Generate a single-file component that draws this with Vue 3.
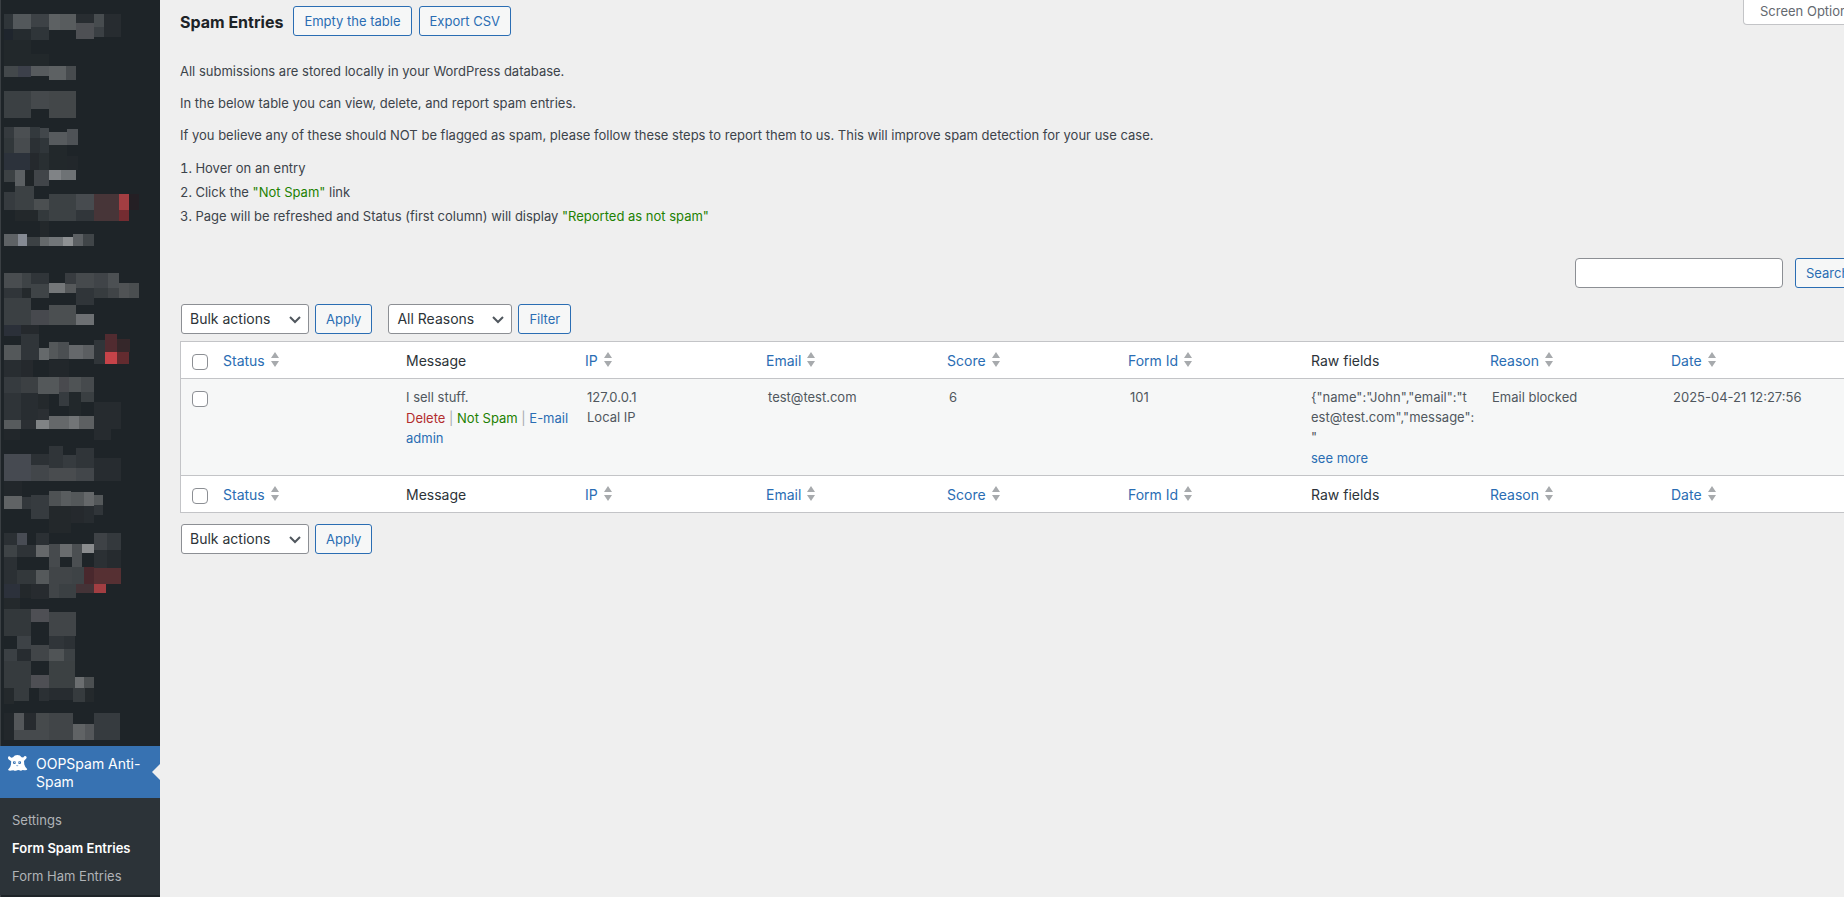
<script setup>
import { ref } from 'vue'

// Redacted menu area: [x, y, width, height, colour] in thirds of a pixel.
const blocks = [
  [12, 42, 27, 45, '#2f3539'], [39, 42, 54, 45, '#53585b'], [93, 42, 54, 39, '#3d4246'], [147, 42, 33, 48, '#5d6163'], [180, 42, 48, 48, '#585c5e'], [228, 42, 54, 27, '#282d31'], [282, 42, 30, 39, '#474c4f'], [312, 42, 51, 69, '#272c30'],
  [12, 87, 27, 33, '#1f252d'], [39, 87, 54, 33, '#252b2f'], [93, 81, 54, 39, '#2f3539'], [228, 69, 54, 48, '#4e5054'], [282, 81, 30, 30, '#3b4044'],
  [12, 120, 81, 78, '#22282b'], [93, 162, 54, 36, '#22282b'],
  [12, 198, 42, 33, '#43484b'], [54, 198, 39, 33, '#3c404a'], [93, 198, 54, 30, '#575b5e'], [147, 198, 51, 42, '#5d6163'], [198, 198, 30, 42, '#474b4e'],
  [12, 273, 81, 81, '#3b4043'], [93, 273, 54, 54, '#45494c'], [147, 273, 81, 81, '#434749'],
  [12, 381, 30, 33, '#353a3e'], [42, 381, 48, 33, '#4b4f52'], [90, 381, 30, 33, '#33393d'], [120, 384, 27, 30, '#42474b'], [147, 396, 54, 39, '#575b5e'], [201, 387, 33, 48, '#4e5256'],
  [12, 414, 30, 45, '#31373a'], [42, 414, 48, 45, '#474b4e'], [90, 414, 30, 45, '#2b3034'], [120, 414, 27, 45, '#30363a'], [147, 435, 54, 75, '#22282b'], [201, 468, 33, 42, '#22272b'],
  [12, 459, 78, 51, '#2c323b'], [90, 459, 27, 51, '#25292d'], [117, 459, 30, 51, '#292f32'],
  [12, 510, 33, 36, '#3c4144'], [45, 510, 30, 48, '#5c6063'], [75, 510, 27, 48, '#1f2427'], [102, 510, 45, 48, '#414549'], [147, 510, 36, 30, '#808386'], [183, 510, 45, 30, '#6e7275'],
  [12, 576, 33, 54, '#363b3f'], [45, 558, 57, 72, '#3c4144'], [102, 597, 45, 33, '#4b4f51'], [147, 582, 81, 81, '#3c4144'], [228, 582, 54, 48, '#474b4f'], [282, 582, 75, 81, '#473538'], [357, 582, 30, 48, '#a33e42'], [387, 582, 30, 48, '#241f24'],
  [45, 630, 69, 33, '#23282b'], [114, 630, 33, 33, '#33393c'], [228, 630, 54, 33, '#31363a'], [357, 630, 30, 33, '#742c31'],
  [120, 663, 27, 48, '#23282b'],
  [12, 702, 42, 36, '#5e6265'], [54, 702, 27, 36, '#858a93'], [81, 711, 39, 27, '#3c4144'], [120, 711, 27, 27, '#65696b'], [147, 711, 42, 27, '#727679'], [189, 711, 30, 27, '#8e9193'], [219, 702, 30, 36, '#5c6063'], [249, 702, 33, 36, '#404548'],

  [12, 819, 54, 45, '#494d50'], [66, 819, 27, 45, '#3e4346'], [93, 819, 54, 33, '#303539'], [195, 819, 33, 33, '#383c40'], [228, 819, 54, 45, '#464a4d'], [282, 819, 42, 45, '#404448'], [324, 819, 33, 45, '#4c5053'],
  [12, 864, 54, 30, '#303539'], [66, 864, 27, 30, '#24292c'], [93, 852, 54, 42, '#3f4447'], [147, 849, 48, 30, '#747779'], [195, 852, 33, 27, '#56595b'], [228, 864, 54, 51, '#303539'], [282, 864, 42, 30, '#373c3f'], [324, 864, 33, 30, '#404447'], [357, 849, 30, 45, '#505355'], [387, 849, 30, 45, '#4a4e50'],
  [12, 894, 81, 81, '#3b4043'], [93, 930, 54, 45, '#47494e'], [147, 915, 81, 60, '#4b4f51'], [228, 942, 54, 33, '#6d7073'],
  [12, 975, 51, 33, '#2b3039'], [63, 975, 54, 27, '#25292d'], [63, 1002, 54, 78, '#303539'], [12, 1035, 51, 45, '#54585a'], [117, 1044, 30, 36, '#65696b'], [147, 1026, 27, 51, '#54585a'], [174, 1026, 33, 51, '#4b4f52'], [207, 1035, 42, 42, '#65686b'], [249, 1035, 33, 42, '#5b5e61'],
  [282, 1020, 33, 72, '#303539'], [315, 1002, 36, 54, '#512b30'], [351, 1017, 39, 39, '#35272a'], [315, 1056, 36, 36, '#c64349'], [351, 1056, 36, 36, '#632b2f'],
  [12, 1080, 51, 51, '#282d31'], [63, 1080, 36, 51, '#25292d'], [147, 1080, 60, 51, '#22272b'],
  [12, 1131, 51, 48, '#363b3f'], [63, 1131, 51, 48, '#3c4043'], [114, 1131, 63, 51, '#54585a'], [177, 1131, 30, 45, '#494a4e'], [207, 1131, 36, 45, '#4f5355'], [243, 1131, 39, 45, '#464a4d'],
  [12, 1179, 51, 81, '#2f3438'], [63, 1179, 51, 81, '#282d31'], [114, 1182, 33, 45, '#24292c'], [177, 1176, 30, 42, '#363b3f'], [207, 1176, 36, 72, '#22282b'], [243, 1176, 39, 30, '#3a3f42'],
  [114, 1227, 33, 33, '#2b2f33'], [12, 1260, 51, 27, '#575b5d'], [63, 1260, 45, 27, '#2b2f33'], [108, 1260, 39, 27, '#808385'], [147, 1248, 60, 39, '#65686a'], [207, 1248, 30, 39, '#727577'], [237, 1248, 45, 39, '#5d6062'], [282, 1206, 81, 81, '#262b2f'], [282, 1287, 51, 33, '#262b2f'], [12, 1287, 48, 33, '#22272b'],
  [147, 1338, 42, 66, '#303539'], [228, 1344, 54, 60, '#303539'], [189, 1365, 39, 39, '#363b3f'], [93, 1362, 54, 33, '#2c3135'], [12, 1362, 81, 81, '#464a51'], [93, 1395, 54, 48, '#42464a'], [147, 1404, 81, 39, '#494c4f'], [228, 1404, 54, 39, '#42464a'], [282, 1374, 81, 69, '#272c30'],
  [12, 1443, 54, 45, '#22272b'], [12, 1488, 54, 39, '#606365'], [66, 1491, 27, 36, '#33383c'], [93, 1485, 54, 72, '#363b3f'], [147, 1473, 36, 45, '#4e5254'], [183, 1473, 30, 45, '#595d5f'], [213, 1476, 39, 42, '#54585a'], [252, 1476, 30, 42, '#65686a'], [282, 1485, 27, 30, '#54585a'], [282, 1515, 27, 30, '#303539'],

  [147, 1518, 66, 81, '#23282b'], [213, 1518, 39, 51, '#25292d'], [252, 1518, 30, 51, '#272c30'],
  [12, 1599, 39, 36, '#2b3034'], [51, 1599, 30, 36, '#484c54'], [108, 1599, 39, 36, '#2b3034'], [282, 1599, 39, 51, '#3e4246'], [321, 1599, 42, 51, '#34393d'],
  [12, 1635, 39, 36, '#3e4346'], [51, 1635, 57, 36, '#2e3337'], [108, 1635, 39, 36, '#65686a'], [147, 1632, 33, 69, '#464a4d'], [180, 1632, 36, 39, '#696c6e'], [216, 1632, 30, 69, '#4b4f52'], [246, 1632, 36, 27, '#8a8c8e'],
  [282, 1650, 39, 54, '#2b3034'], [321, 1650, 42, 54, '#262b2f'],
  [12, 1671, 39, 81, '#2b3034'], [51, 1710, 57, 42, '#33383b'], [108, 1710, 39, 42, '#55595b'], [147, 1701, 69, 51, '#414548'], [216, 1701, 36, 51, '#3e4346'], [252, 1701, 30, 51, '#49282d'], [282, 1704, 81, 48, '#563033'],
  [12, 1752, 48, 42, '#2c313b'], [60, 1752, 33, 42, '#23282b'], [93, 1752, 54, 45, '#272b2f'], [147, 1752, 30, 42, '#414548'], [177, 1752, 51, 42, '#3b4043'], [228, 1752, 54, 27, '#443337'], [282, 1752, 36, 27, '#a23e42'],
  [12, 1794, 48, 33, '#24292c'],
  [12, 1827, 81, 81, '#33383b'], [93, 1827, 54, 39, '#4e4f54'], [147, 1836, 81, 72, '#414548'],
  [51, 1908, 42, 39, '#3d4246'], [147, 1908, 45, 39, '#303539'], [192, 1908, 33, 39, '#2c3135'],
  [12, 1947, 39, 36, '#3b4044'], [51, 1947, 42, 36, '#272c30'], [93, 1935, 54, 48, '#414548'], [147, 1947, 45, 36, '#505456'], [192, 1947, 33, 36, '#3d4245'],
  [12, 1983, 81, 81, '#363b3e'], [93, 2025, 54, 39, '#4e4f54'], [147, 1983, 78, 81, '#3c4143'], [225, 2031, 27, 33, '#6b6e70'], [252, 2031, 30, 33, '#4b4f51'],
  [12, 2064, 30, 48, '#24292c'], [42, 2064, 45, 39, '#363b3e'], [117, 2064, 30, 39, '#2b3034'], [147, 2064, 72, 36, '#272c30'], [219, 2064, 36, 42, '#363b3e'], [255, 2064, 27, 42, '#24292c'],
  [12, 2139, 30, 81, '#22272b'], [42, 2139, 30, 51, '#54575a'], [72, 2139, 36, 51, '#272b2f'], [108, 2139, 39, 51, '#464a4c'], [42, 2190, 105, 30, '#464a4d'], [147, 2139, 72, 81, '#414548'], [219, 2172, 36, 48, '#606365'], [255, 2172, 27, 48, '#54575a'], [282, 2139, 78, 81, '#363b3f'],
]

const columns = [
  { label: 'Status', sortable: true },
  { label: 'Message', sortable: false },
  { label: 'IP', sortable: true },
  { label: 'Email', sortable: true },
  { label: 'Score', sortable: true },
  { label: 'Form Id', sortable: true },
  { label: 'Raw fields', sortable: false },
  { label: 'Reason', sortable: true },
  { label: 'Date', sortable: true },
]

const query = ref('')
const selected = ref(false)
</script>

<template>
  <div class="admin">
    <nav class="sidebar" aria-label="Admin menu">
      <svg class="redacted" viewBox="0 0 480 2238" shape-rendering="crispEdges" aria-hidden="true">
        <rect v-for="(b, i) in blocks" :key="i" :x="b[0]" :y="b[1]" :width="b[2]" :height="b[3]" :fill="b[4]" />
      </svg>
      <a class="menu-current" href="#">
        <svg class="ghost" viewBox="0 0 20 16" aria-hidden="true">
          <path
            fill="#fff"
            fill-rule="evenodd"
            d="M0 2.500Q.300 1 1.800 1.400L3.200 2.700 5 2.300Q6.500 0 9.400 0T13.600 2.300L15.200 2.600 16.300 1.200Q17.800.600 18.600 2.100 18.800 3.400 17.300 4.600L16 6 16.300 9.500Q16.900 12 19.300 14.200 18.800 15.600 16.500 15.300L14.500 14.900Q13 16.300 11.400 15.200 9.900 14.600 8.600 15.400 7 16.400 5.500 15.200L3.300 15.600Q.700 15.900 0 14.700 2.600 12.500 3 9.500L3.200 6.200 1.400 5Q-.200 4 0 2.500ZM6.400 6A1.500 1.500 0 1 0 6.400 9 1.500 1.500 0 1 0 6.400 6ZM11.600 6A1.500 1.500 0 1 0 11.600 9 1.500 1.500 0 1 0 11.600 6ZM8 10.200Q9.200 10.900 10.400 10.200 10 11.300 9.200 11.300T8 10.200Z"
          />
          <circle cx="6.800" cy="7.200" r=".6" fill="#fff" />
          <circle cx="11.200" cy="7.200" r=".6" fill="#fff" />
        </svg>
        <span>OOPSpam Anti-Spam</span>
      </a>
      <ul class="submenu">
        <li><a href="#">Settings</a></li>
        <li><a class="on" href="#">Form Spam Entries</a></li>
        <li><a href="#">Form Ham Entries</a></li>
      </ul>
    </nav>

    <main class="main">
      <div class="wrap">
        <header class="top">
          <h1>Spam Entries</h1>
          <button class="btn" type="button">Empty the table</button>
          <button class="btn" type="button">Export CSV</button>
          <button class="screen-options" type="button">Screen Options</button>
        </header>

        <section class="intro">
          <p>All submissions are stored locally in your WordPress database.</p>
          <p>In the below table you can view, delete, and report spam entries.</p>
          <p>If you believe any of these should NOT be flagged as spam, please follow these steps to report them to us. This will improve spam detection for your use case.</p>
          <ol>
            <li>Hover on an entry</li>
            <li>Click the <span class="green">"Not Spam"</span> link</li>
            <li>Page will be refreshed and Status (first column) will display <span class="green">"Reported as not spam"</span></li>
          </ol>
        </section>

        <form class="search" @submit.prevent>
          <input v-model="query" type="search" aria-label="Search" />
          <button class="btn" type="submit">Search</button>
        </form>

        <div class="tablenav">
          <div class="select bulk">
            <select aria-label="Bulk actions"><option>Bulk actions</option></select>
            <svg viewBox="0 0 12 8" aria-hidden="true"><path d="M1 1l5 5 5-5" /></svg>
          </div>
          <button class="btn" type="button">Apply</button>
          <div class="select reasons">
            <select aria-label="Filter by reason"><option>All Reasons</option></select>
            <svg viewBox="0 0 12 8" aria-hidden="true"><path d="M1 1l5 5 5-5" /></svg>
          </div>
          <button class="btn" type="button">Filter</button>
        </div>

        <table class="entries">
          <thead>
            <tr>
              <td class="check"><input v-model="selected" type="checkbox" aria-label="Select all" /></td>
              <th v-for="c in columns" :key="c.label" scope="col" :class="{ sortable: c.sortable }">
                <a v-if="c.sortable" href="#">{{ c.label }}
                  <svg viewBox="0 0 8 15" aria-hidden="true"><path d="M4 0l4 6H0zM0 9h8l-4 6z" /></svg>
                </a>
                <template v-else>{{ c.label }}</template>
              </th>
            </tr>
          </thead>
          <tbody>
            <tr>
              <td class="check"><input v-model="selected" type="checkbox" aria-label="Select entry" /></td>
              <td></td>
              <td class="message">
                I sell stuff.
                <div class="actions">
                  <a class="delete" href="#">Delete</a> | <a class="green" href="#">Not Spam</a> | <a href="#"><span class="keep">E-mail</span> admin</a>
                </div>
              </td>
              <td>127.0.0.1<br />Local IP</td>
              <td>test@test.com</td>
              <td>6</td>
              <td>101</td>
              <td class="raw">
                <span>{"name":"John","email":"t<br />est@test.com","message":<br />"</span>
                <a href="#">see more</a>
              </td>
              <td>Email blocked</td>
              <td>2025-04-21 12:27:56</td>
            </tr>
          </tbody>
          <tfoot>
            <tr>
              <td class="check"><input v-model="selected" type="checkbox" aria-label="Select all" /></td>
              <th v-for="c in columns" :key="c.label" scope="col" :class="{ sortable: c.sortable }">
                <a v-if="c.sortable" href="#">{{ c.label }}
                  <svg viewBox="0 0 8 15" aria-hidden="true"><path d="M4 0l4 6H0zM0 9h8l-4 6z" /></svg>
                </a>
                <template v-else>{{ c.label }}</template>
              </th>
            </tr>
          </tfoot>
        </table>

        <div class="tablenav bottom">
          <div class="select bulk">
            <select aria-label="Bulk actions"><option>Bulk actions</option></select>
            <svg viewBox="0 0 12 8" aria-hidden="true"><path d="M1 1l5 5 5-5" /></svg>
          </div>
          <button class="btn" type="button">Apply</button>
        </div>
      </div>
    </main>
  </div>
</template>

<style>
body {
  background: #efefef;
}
</style>

<style scoped>
.admin {
  --blue: #2a6db3;
  --bleed: 24px;
  display: flex;
  min-height: 100vh;
  overflow: hidden;
  color: #3c434a;
  font: 13px/20px Inter, "Liberation Sans", sans-serif;
}
.admin * {
  box-sizing: border-box;
}
a {
  color: var(--blue);
  text-decoration: none;
}
.green {
  color: #1d8102;
}

.sidebar {
  flex: none;
  width: 160px;
  background: #1e2428;
  box-shadow: inset 1px 0 #3a3f43;
}
.redacted {
  display: block;
  width: 160px;
  height: 746px;
}
.menu-current {
  position: relative;
  display: flex;
  gap: 8px;
  height: 52px;
  padding: 9px 8px;
  background: #3772b2;
  color: #fff;
  font-size: 14px;
  line-height: 18px;
}
.menu-current::after {
  content: "";
  position: absolute;
  right: 0;
  top: 18px;
  border: 8px solid transparent;
  border-right-color: #efefef;
}
.ghost {
  flex: none;
  width: 20px;
  height: 16px;
}
.submenu {
  margin: 0;
  padding: 8px 0 5px;
  background: #2c3338;
  list-style: none;
}
.submenu a {
  display: block;
  padding: 4px 12px;
  color: #b0b3b7;
}
.submenu .on {
  color: #fff;
  font-weight: 600;
}

.main {
  flex: 1;
  min-width: 0;
  padding-left: 20px;
}
.wrap {
  margin-right: calc(-1 * var(--bleed));
}
.top {
  display: flex;
  align-items: flex-start;
  gap: 7px;
  padding-top: 6px;
}
h1 {
  margin: 0 3px 0 0;
  color: #1d2327;
  font-size: 16px;
  font-weight: 700;
  line-height: 32px;
}
.btn {
  height: 30px;
  padding: 0 10px;
  border: 1px solid var(--blue);
  border-radius: 3px;
  background: #f6f7f7;
  color: var(--blue);
  font: inherit;
  white-space: nowrap;
}
.screen-options {
  width: 125px;
  height: 25px;
  margin: -6px 0 0 auto;
  padding: 0 16px 3px;
  border: 1px solid #c3c4c7;
  border-top: 0;
  border-radius: 0 0 4px 4px;
  background: #fff;
  color: #646970;
  font: inherit;
  text-align: left;
  white-space: nowrap;
}
.intro {
  padding-top: 23px;
}
.intro p {
  margin: 0 0 12px;
}
ol {
  margin: -1px 0 0;
  padding: 0;
  line-height: 24px;
  list-style-position: inside;
}
.search {
  display: flex;
  justify-content: flex-end;
  gap: 12px;
  margin-top: 30px;
}
.search input {
  width: 208px;
  height: 30px;
  padding: 0 8px;
  border: 1px solid #8c8f94;
  border-radius: 4px;
  background: #fff;
  font: inherit;
}
.search .btn {
  width: 73px;
  text-align: left;
}

.tablenav {
  display: flex;
  gap: 6px;
  margin: 16px 0 7px;
  padding-left: 1px;
}
.tablenav.bottom {
  margin-top: 11px;
}
.select {
  position: relative;
}
.bulk {
  width: 128px;
}
.reasons {
  width: 124px;
  margin-left: 10px;
}
.select select {
  width: 100%;
  height: 30px;
  padding: 0 24px 0 8px;
  appearance: none;
  border: 1px solid #8c8f94;
  border-radius: 3px;
  background: #fff;
  color: #2c3338;
  font: inherit;
  font-size: 14px;
}
.select svg {
  position: absolute;
  top: 12px;
  right: 8px;
  width: 12px;
  height: 8px;
  fill: none;
  stroke: #50575e;
  stroke-width: 2;
  pointer-events: none;
}

.entries {
  width: calc(100% - var(--bleed) + 1px);
  table-layout: fixed;
  border: 1px solid #c3c4c7;
  border-spacing: 0;
  background: #fff;
}
.entries th,
.entries td {
  padding: 8px 10px;
  text-align: left;
  vertical-align: top;
}
.entries th {
  padding: 9px 10px 7px;
  color: #2c3338;
  font-size: 14px;
  font-weight: 400;
}
.entries th.sortable {
  padding-left: 8px;
}
.entries .check {
  width: 34px;
  padding: 12px 0 0 11px;
  line-height: 0;
}
.check input {
  width: 16px;
  height: 16px;
  margin: 0;
  appearance: none;
  border: 1px solid #8c8f94;
  border-radius: 4px;
  background: #fff;
}
th a {
  display: flex;
  gap: 6px;
}
th svg {
  width: 8px;
  height: 15px;
  margin-top: 1px;
  fill: #a7aaad;
}
tbody tr {
  background: #f6f7f7;
}
.entries tbody td {
  height: 98px;
  padding-bottom: 4px;
  border: solid #c3c4c7;
  border-width: 1px 0;
  color: #50575e;
}
tbody td:nth-child(n + 4):not(.raw) {
  white-space: nowrap;
}
.entries tbody .message {
  padding-right: 4px;
}
.keep {
  white-space: nowrap;
}
.actions {
  margin-top: 1px;
  color: #a7aaad;
}
.delete {
  color: #b32d2e;
}
.raw span,
.raw a {
  display: block;
  white-space: nowrap;
}
.raw a {
  margin-top: 1px;
}
</style>
